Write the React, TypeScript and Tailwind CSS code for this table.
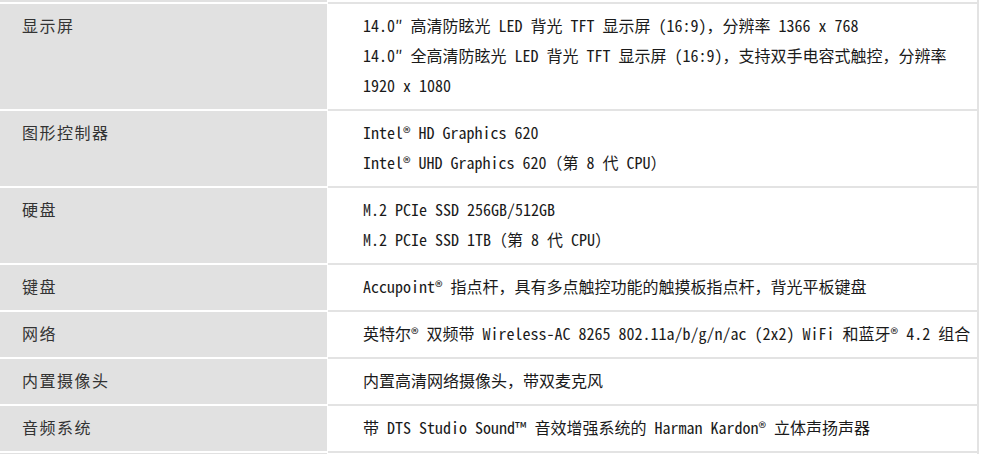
const specs = [
  {
    label: "显示屏",
    lines: [
      "14.0″ 高清防眩光 LED 背光 TFT 显示屏 (16:9)，分辨率 1366 x 768",
      "14.0″ 全高清防眩光 LED 背光 TFT 显示屏 (16:9)，支持双手电容式触控，分辨率 1920 x 1080",
    ],
  },
  {
    label: "图形控制器",
    lines: ["Intel® HD Graphics 620", "Intel® UHD Graphics 620（第 8 代 CPU）"],
  },
  {
    label: "硬盘",
    lines: ["M.2 PCIe SSD 256GB/512GB", "M.2 PCIe SSD 1TB（第 8 代 CPU）"],
  },
  {
    label: "键盘",
    lines: ["Accupoint® 指点杆，具有多点触控功能的触摸板指点杆，背光平板键盘"],
  },
  {
    label: "网络",
    lines: ["英特尔® 双频带 Wireless-AC 8265 802.11a/b/g/n/ac (2x2) WiFi 和蓝牙® 4.2 组合"],
  },
  {
    label: "内置摄像头",
    lines: ["内置高清网络摄像头，带双麦克风"],
  },
  {
    label: "音频系统",
    lines: ["带 DTS Studio Sound™ 音效增强系统的 Harman Kardon® 立体声扬声器"],
  },
];

const labelFont = { fontFamily: '"Noto Sans CJK SC", "Noto Sans", sans-serif' };
const valueFont = { fontFamily: '"Noto Sans Mono CJK SC", "Liberation Mono", "Noto Sans CJK SC", monospace' };

export default function App() {
  return (
    <div className="w-[981px] h-[454px] overflow-hidden bg-white">
      <div className="w-[979px] border-r-2 border-[#e3e3e3]">
        {/* tail of the row above */}
        <div className="grid grid-cols-[327px_1fr] h-[2px]">
          <div className="bg-[#e1e1e1]" />
          <div />
        </div>

        {specs.map((s) => (
          <div key={s.label} className="grid grid-cols-[327px_1fr] gap-x-px">
            <div
              className="bg-[#e1e1e1] border-t-2 border-white pl-[22px] pt-[6px] pb-[9px] text-[16px] leading-[30px] tracking-[1.5px] text-[#333]"
              style={labelFont}
            >
              {s.label}
            </div>
            <div
              className="border-t-2 border-[#e3e3e3] pl-[35px] pr-[2px] pt-[6px] pb-[9px] text-[16px] leading-[30px] text-[#1a1a1a]"
              style={valueFont}
            >
              {s.lines.map((l) => (
                <div key={l}>{l}</div>
              ))}
            </div>
          </div>
        ))}

        <div className="grid grid-cols-[327px_1fr] gap-x-px h-[8px]">
          <div className="bg-[#e1e1e1] border-t-2 border-white" />
          <div className="border-t-2 border-[#e3e3e3]" />
        </div>
      </div>
    </div>
  );
}
